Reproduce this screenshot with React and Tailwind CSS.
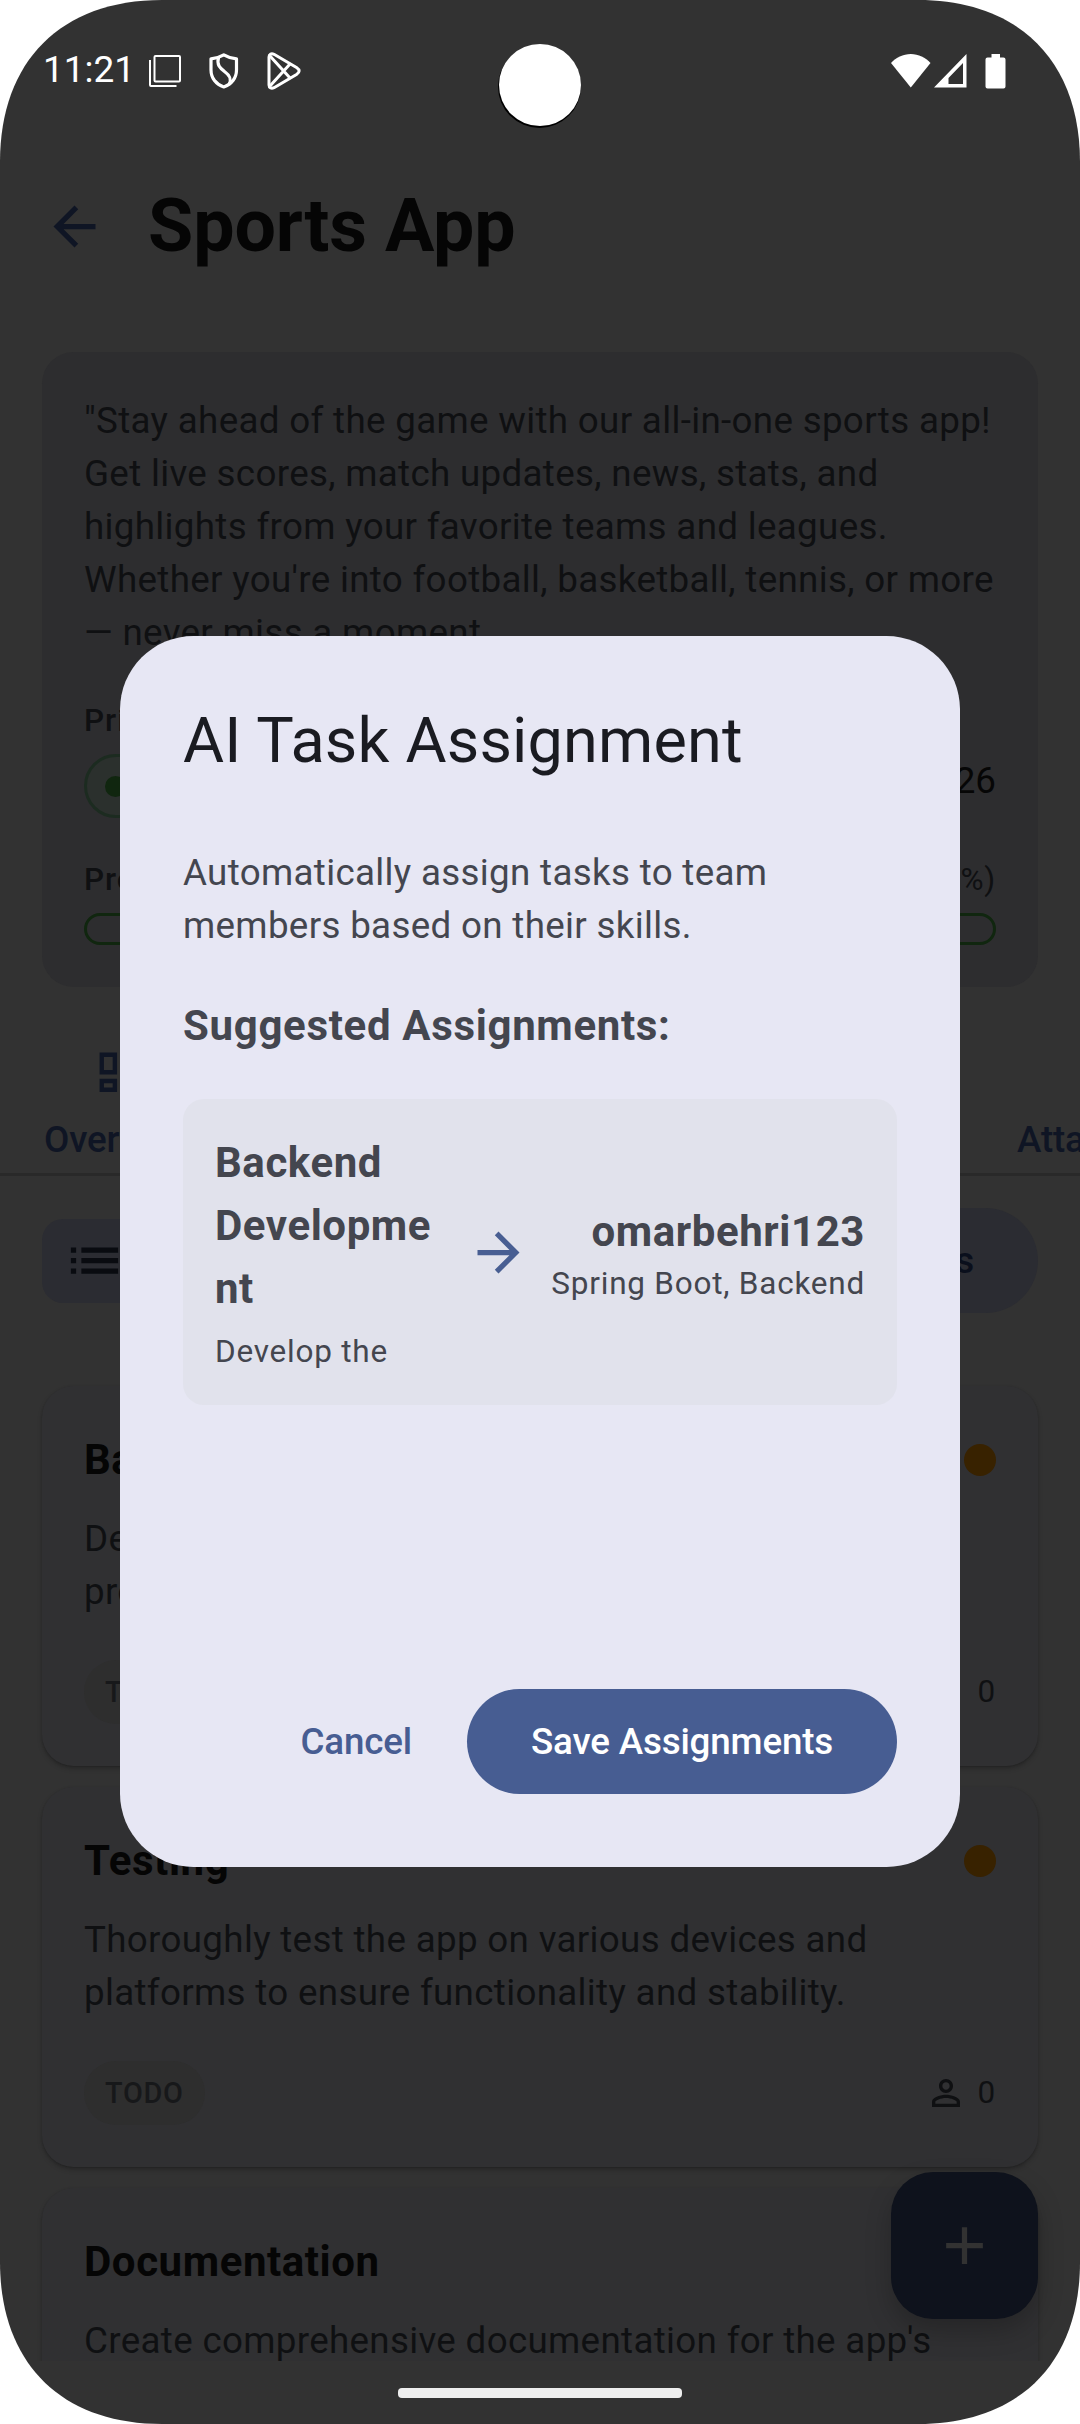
import React from "react";

const body = "text-[36.75px] leading-[53px] tracking-[0.32px]";
const small = "text-[31.5px] leading-[42px] tracking-[0.77px]";
const label = "text-[31.5px] leading-[42px] tracking-[1px] font-medium";
const title = "text-[42px] leading-[63px] tracking-[0.57px] font-bold";
const button = "text-[36.75px] leading-[53px] tracking-[-0.17px] font-medium";

function Icon({ d, size, className = "" }) {
  return (
    <svg viewBox="0 0 24 24" width={size} height={size} fill="currentColor" className={"shrink-0 " + className}>
      <path d={d} />
    </svg>
  );
}

const ARROW_BACK = "M20 11H7.83l5.59-5.59L12 4l-8 8 8 8 1.41-1.41L7.83 13H20v-2z";
const ARROW_FORWARD = "M12 4l-1.41 1.41L16.17 11H4v2h12.17l-5.58 5.59L12 20l8-8z";
const DASHBOARD = "M19 5v2h-4V5h4M9 5v6H5V5h4m10 8v6h-4v-6h4M9 17v2H5v-2h4M21 3h-8v6h8V3zM11 3H3v10h8V3zm10 8h-8v10h8V11zm-10 4H3v6h8v-6z";
const LIST = "M3 13h2v-2H3v2zm0 4h2v-2H3v2zm0-8h2V7H3v2zm4 4h14v-2H7v2zm0 4h14v-2H7v2zM7 7v2h14V7H7z";
const PERSON = "M12 5.9c1.16 0 2.1.94 2.1 2.1s-.94 2.1-2.1 2.1S9.9 9.16 9.9 8s.94-2.1 2.1-2.1m0 9c2.97 0 6.1 1.46 6.1 2.1v1.1H5.9V17c0-.64 3.13-2.1 6.1-2.1M12 4C9.79 4 8 5.79 8 8s1.79 4 4 4 4-1.79 4-4-1.79-4-4-4zm0 9c-2.67 0-8 1.34-8 4v3h16v-3c0-2.66-5.33-4-8-4z";
const ADD = "M19 13h-6v6h-2v-6H5v-2h6V5h2v6h6v2z";

function StatusBar() {
  return (
    <div className="flex h-[142px] shrink-0 items-center pl-[43px] pr-[74px] text-white">
      <span className="w-[106px] -translate-y-[1px] whitespace-nowrap text-[37px] leading-[44px]">11:21</span>
      <svg width="32" height="32" viewBox="0 0 32 32" fill="none" stroke="white" strokeWidth="2">
        <rect x="5.5" y="1" width="25.5" height="25.5" rx="1" />
        <path d="M1 5v25a1 1 0 0 0 1 1h25.500" />
      </svg>
      <svg className="ml-[28px]" width="30" height="36" viewBox="0 0 30 36" fill="none" stroke="white" strokeWidth="3.200" strokeLinejoin="round">
        <path d="M14.800 1.800 C11 4 6 5.500 2 5.800 V17 C2 25 7 31.500 14.800 34 C22.500 31.500 27.500 25 27.500 17 V5.800 C23.500 5.500 18.500 4 14.800 1.800Z" />
        <path d="M9.500 4.500 C7.500 12 11 15 15.500 18.500 C21 22.500 23 26 20 31.500" />
      </svg>
      <svg className="ml-[28px]" width="34" height="38" viewBox="0 0 34 38" fill="none" stroke="white" strokeWidth="3" strokeLinejoin="round">
        <path d="M2 5 C2 2 4.500 1 7 2.300 L29.500 15.500 C33 17.800 33 20.200 29.500 22.500 L7 35.700 C4.500 37 2 36 2 33Z" />
        <path d="M3 4 L23 26 M3 34 L23 12" />
      </svg>
      <div className="ml-auto flex items-start">
        <svg width="40" height="34" viewBox="0 0 40 34" fill="white">
          <path d="M0 9 C5 3.500 12 0 19.800 0 C27.500 0 34.500 3.500 39.500 9 L19.800 33.500Z" />
        </svg>
        <svg className="ml-[3px]" width="33" height="34" viewBox="0 0 33 34" fill="white" fillRule="evenodd">
          <path d="M32.500 0V33.500H0Z M29 9 L14.500 24V30H29Z" />
        </svg>
        <svg className="ml-[18.500px]" width="21" height="35" viewBox="0 0 21 35" fill="white">
          <path d="M6.500 0H15V3.500H18.500A2 2 0 0 1 20.500 5.500V32.500A2 2 0 0 1 18.500 34.500H2.500A2 2 0 0 1 .5 32.500V5.500A2 2 0 0 1 2.500 3.500H6.500Z" />
        </svg>
      </div>
    </div>
  );
}

function SummaryCard() {
  return (
    <section className="mx-[42px] mt-[42px] h-[635px] shrink-0 rounded-[31.5px] bg-[#2d2d2f] p-[42px] text-[#0f1012]">
      <p className={body + " whitespace-nowrap"}>
        "Stay ahead of the game with our all-in-one sports app!<br />
        Get live scores, match updates, news, stats, and<br />
        highlights from your favorite teams and leagues.<br />
        Whether you're into football, basketball, tennis, or more<br />
        — never miss a moment.
      </p>
      <div className="mt-[41px] flex justify-between">
        <div>
          <div className={label}>Priority</div>
          <div className="mt-[12px] flex h-[64px] w-[160px] items-center rounded-full border-[3px] border-[#1c2b20] bg-[#2b302d] pl-[18px]">
            <span className="size-[21px] rounded-full bg-[#10260f]" />
          </div>
        </div>
        <div className="pt-[54px] text-[36.75px] leading-[53px] text-[#060606]">2026</div>
      </div>
      <div className="mt-[41px] flex justify-between">
        <span className={label}>Progress</span>
        <span className={small}>(0%)</span>
      </div>
      <div className="mt-[12px] h-[32px] rounded-full border-[3px] border-[#10260f]" />
    </section>
  );
}

function Tabs() {
  return (
    <nav className="flex h-[189px] shrink-0 items-start justify-between overflow-hidden border-b-[3px] border-[#292929] pl-[44px] pt-[59px] text-[#0f1524]">
      <div className="flex flex-col items-center">
        <Icon d={DASHBOARD} size={52.5} />
        <span className={button + " mt-[14px]"}>Overview</span>
      </div>
      <div className="w-[63px] overflow-hidden pt-[67px]">
        <span className={button + " whitespace-nowrap"}>Attachments</span>
      </div>
    </nav>
  );
}

function TaskCard({ name, lines }) {
  return (
    <article className="h-[380px] shrink-0 rounded-[31.5px] bg-[#303032] p-[42px] shadow-[0_3px_5px_rgba(0,0,0,0.2),0_1px_2px_rgba(0,0,0,0.15)]">
      <div className="flex items-center justify-between">
        <h3 className={title + " text-[#050505]"}>{name}</h3>
        <span className="size-[32px] rounded-full bg-[#382200]" />
      </div>
      <p className={body + " mt-[21px] h-[106px] whitespace-nowrap text-[#0f1012]"}>
        {lines.map((line) => (
          <span key={line} className="block">{line}</span>
        ))}
      </p>
      <div className="mt-[42px] flex h-[64px] items-center justify-between">
        <span className="flex h-[64px] items-center rounded-full bg-[#2e2e2e] px-[21px] text-[28.9px] leading-[42px] tracking-[0.7px] font-medium text-[#17181a]">
          TODO
        </span>
        <span className="flex items-center gap-[10.5px] text-[#0f1012]">
          <Icon d={PERSON} size={42} />
          <span className={small}>0</span>
        </span>
      </div>
    </article>
  );
}

function AssignmentDialog() {
  return (
    <div className="flex h-[1231px] w-[840px] flex-col rounded-[73.5px] bg-[#e7e7f4] px-[63px] pt-[63px] pb-[73px] text-[#44464f]">
      <h2 className="text-[63px] leading-[84px] tracking-[0.17px] text-[#1a1b21]">AI Task Assignment</h2>
      <p className={body + " mt-[63px] whitespace-nowrap"}>
        Automatically assign tasks to team<br />members based on their skills.
      </p>
      <h3 className="mt-[42px] text-[42px] leading-[63px] tracking-[0.67px] font-bold">Suggested Assignments:</h3>
      <div className="mt-[42px] flex h-[306px] items-center rounded-[21px] bg-[#e1e2ec] px-[32px]">
        <div className="w-[252px]">
          <div className={title}>Backend<br />Developme<br />nt</div>
          <div className={small + " mt-[11px]"}>Develop the</div>
        </div>
        <Icon d={ARROW_FORWARD} size={63} className="text-[#485e92]" />
        <div className="ml-auto text-right">
          <div className={title}>omarbehri123</div>
          <div className={small + " whitespace-nowrap"}>Spring Boot, Backend</div>
        </div>
      </div>
      <div className="mt-auto flex items-center justify-end gap-[21px]">
        <button className={button + " h-[105px] px-[34px] text-[#475d92]"}>Cancel</button>
        <button className={button + " h-[105px] w-[430px] rounded-full bg-[#475d92] text-white"}>Save Assignments</button>
      </div>
    </div>
  );
}

export default function App() {
  return (
    <div className="relative h-[2424px] w-[1080px] overflow-hidden bg-white font-['Roboto',sans-serif]">
      <main className="flex h-[2424px] w-[1080px] flex-col overflow-hidden bg-[#323232] [clip-path:path('M0_162C0_61_61_0_162_0H918C1019_0_1080_61_1080_162V2262C1080_2363_1019_2424_918_2424H162C61_2424_0_2363_0_2262Z')]">
        <StatusBar />
        <header className="flex h-[168px] shrink-0 items-center gap-[42px] pl-[43px]">
          <Icon d={ARROW_BACK} size={63} className="text-[#0f1524]" />
          <h1 className="text-[73.5px] leading-[94px] tracking-[-0.1px] font-bold text-[#050505]">Sports App</h1>
        </header>
        <SummaryCard />
        <Tabs />
        <div className="mt-[32px] flex h-[105px] shrink-0 items-center justify-between px-[42px]">
          <div className="flex h-[84px] w-[200px] items-center rounded-[21px] bg-[#2b2c32] pl-[21px] text-[#090b10]">
            <Icon d={LIST} size={63} />
          </div>
          <div className={button + " flex h-[105px] w-[420px] items-center justify-end rounded-full bg-[#2b2c32] pr-[64px] text-[#0a0f1c]"}>
            Assign Tasks
          </div>
        </div>
        <div className="mt-[31px] flex h-[1017px] shrink-0 flex-col gap-[21px] overflow-hidden px-[42px] pt-[42px]">
          <TaskCard name="Backend" lines={["Develop the backend", "processes"]} />
          <TaskCard name="Testing" lines={["Thoroughly test the app on various devices and", "platforms to ensure functionality and stability."]} />
          <TaskCard name="Documentation" lines={["Create comprehensive documentation for the app's"]} />
        </div>
        <div className="mx-auto mt-[27px] h-[10px] w-[284px] shrink-0 rounded-[4px] bg-[#eeeeee]" />
      </main>

      {/* camera cut-out */}
      <div className="absolute left-[498px] top-[45px] size-[83px] rounded-full bg-black" />
      <div className="absolute left-[499px] top-[44px] size-[82px] rounded-full bg-white" />

      <div className="absolute left-[891px] top-[2172px] flex size-[147px] items-center justify-center rounded-[42px] bg-[#0e121c] text-[#323232] shadow-[0_12px_26px_rgba(0,0,0,0.22)]">
        <Icon d={ADD} size={63} />
      </div>

      <div className="absolute inset-0 flex items-start justify-center pt-[636px]">
        <AssignmentDialog />
      </div>
    </div>
  );
}
